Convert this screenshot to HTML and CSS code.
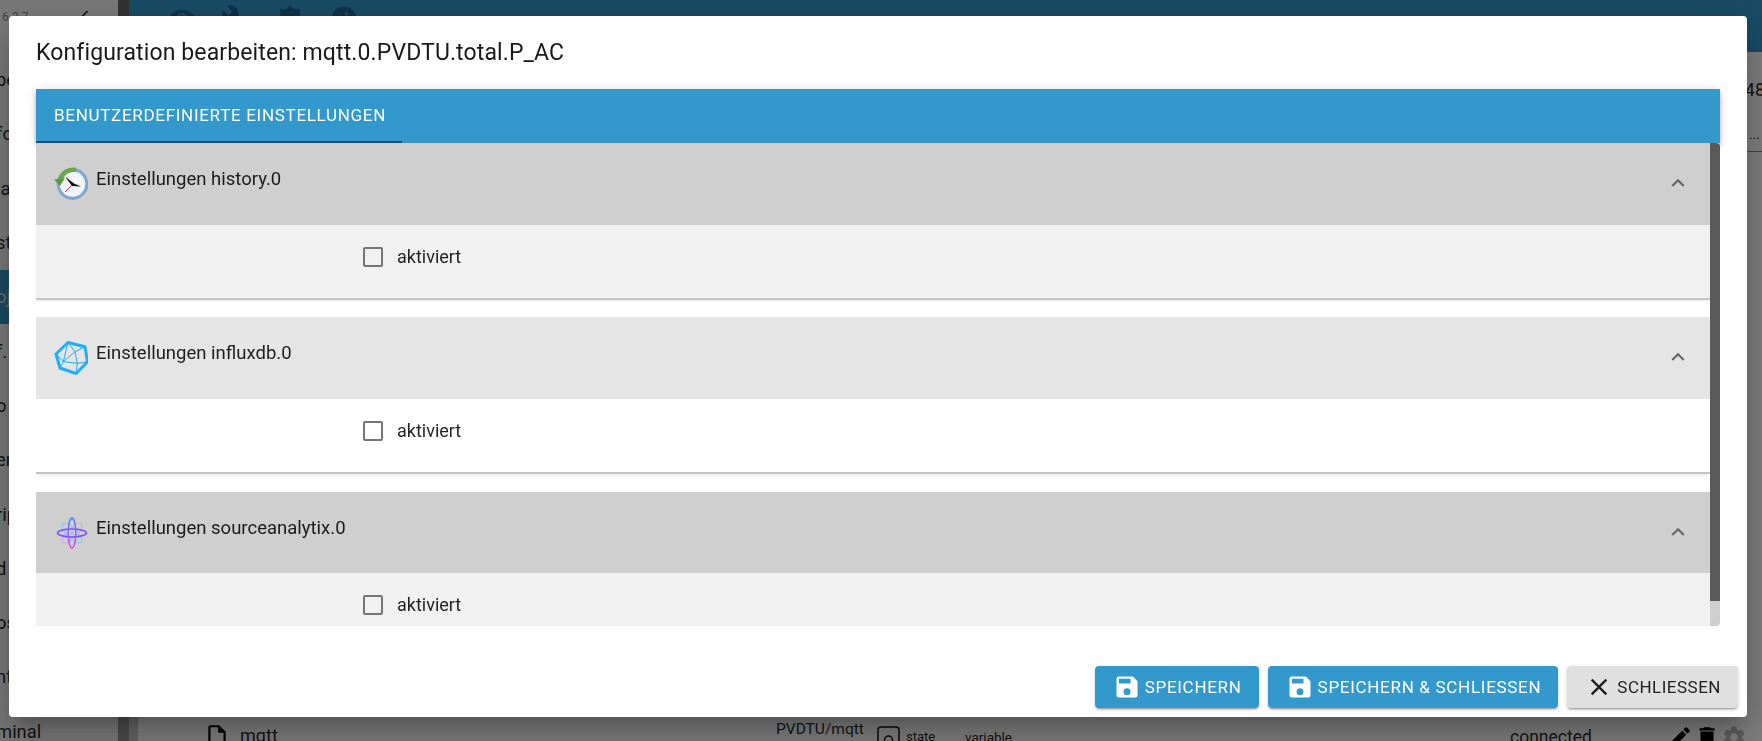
FILE: index.html
```html
<!DOCTYPE html>
<html>
<head>
  <meta charset="UTF-8">
  <title>Konfiguration bearbeiten</title>
  <link rel="stylesheet" href="styles.css">
</head>
<body>
  <div class="app">

    <!-- Page behind the dialog, only its edges show -->
    <div class="sidebar">
      <div class="version">
        <span>6.3.7</span>
        <svg class="collapse" viewBox="0 0 24 24"><path d="M15.410 7.410L14 6l-6 6 6 6 1.410-1.410L10.830 12z"/></svg>
      </div>
      <div class="menu-item"><span>pe</span></div>
      <div class="menu-item"><span>fo</span></div>
      <div class="menu-item"><span>la</span></div>
      <div class="menu-item"><span>st</span></div>
      <div class="menu-item selected"><span>oj</span></div>
      <div class="menu-item"><span>f.</span></div>
      <div class="menu-item"><span>o</span></div>
      <div class="menu-item"><span>er</span></div>
      <div class="menu-item"><span>rip</span></div>
      <div class="menu-item"><span>d</span></div>
      <div class="menu-item"><span>os</span></div>
      <div class="menu-item"><span>nt</span></div>
      <div class="menu-item"><span>minal</span></div>
    </div>
    <div class="main">
      <div class="topbar">
        <svg class="top-icon" viewBox="0 0 24 24"><path d="M12 4.500C7 4.500 2.700 7.600 1 12c1.700 4.400 6 7.500 11 7.500s9.300-3.100 11-7.500c-1.700-4.400-6-7.500-11-7.500zM12 17a5 5 0 1 1 0-10 5 5 0 0 1 0 10zm0-8a3 3 0 1 0 0 6 3 3 0 0 0 0-6z"/></svg>
        <svg class="top-icon" viewBox="0 0 24 24"><path d="M22.700 19l-9.100-9.100c.9-2.300.4-5-1.500-6.900-2-2-5-2.400-7.400-1.300L9 6 6 9 1.600 4.700C.4 7.100.9 10.100 2.900 12.100c1.900 1.900 4.600 2.400 6.900 1.500l9.100 9.100c.4.4 1 .4 1.400 0l2.300-2.300c.5-.4.5-1.100.1-1.400z"/></svg>
        <svg class="top-icon" viewBox="0 0 24 24"><path d="M12 1l3 3h5v5l3 3-3 3v5h-5l-3 3-3-3H4v-5l-3-3 3-3V4h5z"/></svg>
        <svg class="top-icon" viewBox="0 0 24 24"><path fill-rule="evenodd" d="M12 2a10 10 0 1 0 0 20 10 10 0 0 0 0-20zm2 4a1.500 1.500 0 1 1 0 3 1.500 1.500 0 0 1 0-3z"/></svg>
      </div>
      <div class="toolbar">
        <span class="toolbar-text">48</span>
        <span class="toolbar-dots">...</span>
      </div>
      <div class="list-space"></div>
      <div class="row">
        <svg class="file-icon" viewBox="0 0 24 24"><path d="M14 2H6a2 2 0 0 0-2 2v16a2 2 0 0 0 2 2h12a2 2 0 0 0 2-2V8l-6-6zm4 18H6V4h7v5h5v11z"/></svg>
        <span class="row-name">mqtt</span>
        <span class="row-path">PVDTU/mqtt</span>
        <svg class="type-icon" viewBox="0 0 23 24" fill="none" stroke="#111" stroke-width="1.500"><rect x="1" y="1" width="21" height="24" rx="3"/><circle cx="11.500" cy="14" r="4"/></svg>
        <span class="row-type">state</span>
        <span class="row-role">variable</span>
        <span class="row-value">connected</span>
        <span class="row-actions">
          <svg viewBox="0 0 24 24"><path d="M3 17.250V21h3.750L17.810 9.940l-3.750-3.750L3 17.250zM20.710 7.040a1 1 0 0 0 0-1.410l-2.340-2.340a1 1 0 0 0-1.410 0l-1.830 1.830 3.750 3.750 1.830-1.830z"/></svg>
          <svg viewBox="0 0 24 24"><path d="M6 19c0 1.100.9 2 2 2h8c1.100 0 2-.9 2-2V7H6v12zM19 4h-3.500l-1-1h-5l-1 1H5v2h14V4z"/></svg>
          <svg class="gear" viewBox="0 0 24 24"><path d="M19.140 12.940c.04-.3.06-.61.06-.94 0-.32-.02-.64-.07-.94l2.030-1.580a.49.49 0 0 0 .12-.61l-1.920-3.320a.488.488 0 0 0-.59-.22l-2.390.96c-.5-.38-1.030-.7-1.620-.94l-.36-2.540a.484.484 0 0 0-.48-.41h-3.840c-.24 0-.43.17-.47.41l-.36 2.540c-.59.24-1.130.57-1.620.94l-2.390-.96c-.22-.08-.47 0-.59.22L2.740 8.870c-.12.21-.08.47.12.61l2.030 1.580c-.05.3-.09.63-.09.94s.02.64.07.94l-2.030 1.580a.49.49 0 0 0-.12.61l1.920 3.320c.12.22.37.29.59.22l2.390-.96c.5.38 1.030.7 1.620.94l.36 2.540c.05.24.24.41.48.41h3.840c.24 0 .44-.17.47-.41l.36-2.540c.59-.24 1.130-.56 1.620-.94l2.390.96c.22.08.47 0 .59-.22l1.920-3.320c.12-.22.07-.47-.12-.61l-2.010-1.580zM12 15.600c-1.980 0-3.600-1.620-3.600-3.600s1.620-3.600 3.600-3.600 3.600 1.620 3.600 3.600-1.620 3.600-3.600 3.600z"/></svg>
        </span>
      </div>
    </div>
  </div>

  <div class="backdrop"></div>

  <!-- Dialog -->
  <div class="dialog">
    <h2 class="dialog-title">Konfiguration bearbeiten: mqtt.0.PVDTU.total.P_AC</h2>

    <div class="dialog-content">
      <div class="tabs">
        <div class="tab">Benutzerdefinierte Einstellungen</div>
      </div>

      <div class="panels">
        <div class="panels-list">

          <div class="panel">
            <div class="panel-head grey">
              <svg class="adapter-icon" viewBox="0 0 34 34">
                <circle cx="18.500" cy="17" r="14.300" fill="#f2f6fa" stroke="#7fa9d3" stroke-width="3.200"/>
                <path d="M6.500 12A13.500 13.500 0 0 1 22 3" fill="none" stroke="#6aa84f" stroke-width="4.500"/>
                <path d="M0 12.500l11-1.500-5 8z" fill="#5c9a41"/>
                <path d="M11 9.500l9 7 7 3-9-.5z" fill="#111"/>
                <path d="M18 18l-7 7" stroke="#d33" stroke-width="1"/>
              </svg>
              <span class="panel-title">Einstellungen history.0</span>
              <svg class="chevron" viewBox="0 0 24 24"><path d="M12 8l-6 6 1.410 1.410L12 10.830l4.590 4.580L18 14z"/></svg>
            </div>
            <div class="panel-body grey">
              <span class="check-box"></span>
              <span class="check-label">aktiviert</span>
            </div>
          </div>

          <div class="panel">
            <div class="panel-head light">
              <svg class="adapter-icon" viewBox="0 0 34 34" fill="none" stroke="#22adf6">
                <path d="M14 1.500L31 5.700 33.500 21 22 32.500 6 27 2 13z" stroke-width="3" stroke-linejoin="round"/>
                <path d="M14 1.500L21 10.700 31 5.700M21 10.700L9.300 20.700 14 1.500M21 10.700L23.300 22.300 9.300 20.700 6 27M23.300 22.300L33.500 21M23.300 22.300L22 32.500M2 13L9.300 20.700" stroke-width="1"/>
              </svg>
              <span class="panel-title">Einstellungen influxdb.0</span>
              <svg class="chevron" viewBox="0 0 24 24"><path d="M12 8l-6 6 1.410 1.410L12 10.830l4.590 4.580L18 14z"/></svg>
            </div>
            <div class="panel-body">
              <span class="check-box"></span>
              <span class="check-label">aktiviert</span>
            </div>
          </div>

          <div class="panel last">
            <div class="panel-head grey">
              <svg class="adapter-icon" viewBox="0 0 34 34" fill="none">
                <defs>
                  <linearGradient id="atom" x1="0" y1="0" x2="0" y2="1">
                    <stop offset="0" stop-color="#3b82f6"/>
                    <stop offset="1" stop-color="#d946ef"/>
                  </linearGradient>
                </defs>
                <ellipse cx="18" cy="17" rx="13" ry="5" transform="rotate(45 18 17)" stroke="#7cc8fb" stroke-width="1"/>
                <ellipse cx="18" cy="17" rx="13" ry="5" transform="rotate(-45 18 17)" stroke="#d8a4fb" stroke-width="1"/>
                <ellipse cx="18" cy="17" rx="14.500" ry="4" stroke="#7c4dff" stroke-width="1.500"/>
                <ellipse cx="18" cy="17" rx="3.800" ry="15" stroke="url(#atom)" stroke-width="1.500"/>
                <circle cx="18" cy="17" r="1.800" fill="#a5b4fc"/>
              </svg>
              <span class="panel-title">Einstellungen sourceanalytix.0</span>
              <svg class="chevron" viewBox="0 0 24 24"><path d="M12 8l-6 6 1.410 1.410L12 10.830l4.590 4.580L18 14z"/></svg>
            </div>
            <div class="panel-body grey">
              <span class="check-box"></span>
              <span class="check-label">aktiviert</span>
            </div>
          </div>

        </div>
        <div class="scrollbar"><div class="scroll-thumb"></div></div>
      </div>
    </div>

    <div class="dialog-actions">
      <button class="btn primary">
        <svg viewBox="0 0 24 24"><path d="M17 3H5a2 2 0 0 0-2 2v14a2 2 0 0 0 2 2h14a2 2 0 0 0 2-2V7l-4-4zm-5 16a3 3 0 1 1 0-6 3 3 0 0 1 0 6zm3-10H5V5h10v4z"/></svg>
        Speichern
      </button>
      <button class="btn primary">
        <svg viewBox="0 0 24 24"><path d="M17 3H5a2 2 0 0 0-2 2v14a2 2 0 0 0 2 2h14a2 2 0 0 0 2-2V7l-4-4zm-5 16a3 3 0 1 1 0-6 3 3 0 0 1 0 6zm3-10H5V5h10v4z"/></svg>
        Speichern &amp; Schließen
      </button>
      <button class="btn plain">
        <svg viewBox="0 0 24 24"><path d="M19 6.410L17.590 5 12 10.590 6.410 5 5 6.410 10.590 12 5 17.590 6.410 19 12 13.410 17.590 19 19 17.590 13.410 12z"/></svg>
        Schließen
      </button>
    </div>
  </div>
</body>
</html>
```

FILE: styles.css
```css
html, body {
  margin: 0;
  height: 741px;
  overflow: hidden;
}

body {
  font-family: Roboto, sans-serif;
  color: rgba(0, 0, 0, 0.87);
  background: #fff;
}

.app {
  display: flex;
  height: 741px;
}

/* page behind the dialog */
.sidebar {
  width: 118px;
  flex-shrink: 0;
  overflow: hidden;
  background: #f5f5f5;
  border-right: 11px solid #999;
  border-image: linear-gradient(#666 52px, #999 52px) 1;
}

.version {
  height: 52.5px;
  display: flex;
  font-size: 12px;
  color: #888;
  padding: 10px 0 0 2px;
  box-sizing: border-box;
}

.collapse {
  width: 22px;
  height: 22px;
  margin: -5.5px 0 0 45px;
  fill: #333;
}

.menu-item {
  height: 54.3px;
  display: flex;
  align-items: center;
  font-size: 18.4px;
}

.menu-item span {
  margin-left: -4px;
}

.menu-item.selected {
  background: #3399cc;
  color: #ddd;
}

.main {
  flex: 1;
  display: flex;
  flex-direction: column;
  background: #fff;
  min-width: 0;
}

.topbar {
  height: 52px;
  flex-shrink: 0;
  background: #3399cc;
  display: flex;
  gap: 24px;
  padding: 4px 0 0 38px;
  box-sizing: border-box;
}

.top-icon {
  width: 30px;
  height: 30px;
  fill: #1e6690;
}

.toolbar {
  height: 100px;
  flex-shrink: 0;
  display: flex;
  flex-direction: column;
  align-items: flex-end;
  border-bottom: 1px solid #888;
  font-size: 18px;
  line-height: 22px;
  box-sizing: border-box;
  padding-top: 27px;
}

.toolbar-text {
  margin-right: -3px;
}

.toolbar-dots {
  margin: 22px 2px 0 0;
  font-size: 14px;
}

.list-space {
  flex: 1;
  border-left: 9px solid #ccc;
}

.row {
  height: 24px;
  flex-shrink: 0;
  display: flex;
  align-items: flex-start;
  padding-left: 66px;
  border-left: 9px solid #ccc;
  overflow: hidden;
}

.file-icon {
  width: 26px;
  height: 26px;
  flex-shrink: 0;
  margin-top: 6px;
}

.row-name {
  width: 536px;
  margin: 8px 0 0 10px;
  font-size: 18px;
  line-height: 22px;
}

.row-path {
  width: 101px;
  margin-top: 3px;
  font-size: 15.5px;
  line-height: 18px;
}

.type-icon {
  width: 23px;
  height: 24px;
  flex-shrink: 0;
  margin-top: 9px;
}

.row-type {
  width: 59px;
  margin: 12px 0 0 6px;
  font-size: 13px;
  line-height: 16px;
}

.row-role {
  width: 545px;
  margin-top: 12px;
  font-size: 13.5px;
  line-height: 16px;
}

.row-value {
  width: 157px;
  margin-top: 9px;
  font-size: 17.5px;
  line-height: 22px;
}

.row-actions {
  display: flex;
  gap: 2px;
  margin-top: 7px;
}

.row-actions svg {
  width: 26px;
  height: 26px;
  margin-right: -1px;
}

.row-actions .gear {
  fill: #bbb;
}

.backdrop {
  position: fixed;
  inset: 0;
  background: rgba(0, 0, 0, 0.5);
}

/* dialog */
.dialog {
  position: fixed;
  left: 9px;
  top: 16px;
  width: 1738px;
  height: 701px;
  background: #fff;
  border-radius: 4px;
  box-shadow: 0 11px 15px -7px rgba(0, 0, 0, 0.2), 0 24px 38px 3px rgba(0, 0, 0, 0.14), 0 9px 46px 8px rgba(0, 0, 0, 0.12);
  display: flex;
  flex-direction: column;
}

.dialog-title {
  margin: 0;
  height: 73px;
  padding: 21px 27px 0;
  box-sizing: border-box;
  font-size: 23px;
  font-weight: 400;
  letter-spacing: 0.12px;
  line-height: 32px;
  color: rgba(0, 0, 0, 0.9);
}

.dialog-content {
  flex: 1;
  padding: 0 27px;
  min-height: 0;
}

.tabs {
  height: 54px;
  background: #3399cc;
  box-shadow: 0 2px 4px -1px rgba(0, 0, 0, 0.2), 0 4px 5px 0 rgba(0, 0, 0, 0.14), 0 1px 10px 0 rgba(0, 0, 0, 0.12);
}

.tab {
  width: 366px;
  height: 54px;
  padding-left: 18px;
  box-sizing: border-box;
  border-bottom: 2px solid #164a8a;
  text-transform: uppercase;
  color: #fff;
  font-size: 17px;
  font-weight: 400;
  letter-spacing: 0.7px;
  line-height: 52px;
  white-space: nowrap;
}

.panels {
  display: flex;
  height: 483px;
}

.panels-list {
  flex: 1;
  min-width: 0;
}

.panel {
  height: 174.4px;
}

.panel.last {
  height: 134px;
}

.panel-head {
  height: 81.6px;
  display: flex;
  padding: 24px 19px 0 18px;
  box-sizing: border-box;
}

.panel-head.grey { background: #cfcfcf; }
.panel-head.light { background: #e5e5e5; }

.adapter-icon {
  width: 34px;
  height: 34px;
  flex-shrink: 0;
}

.panel-title {
  font-size: 18.5px;
  line-height: 24px;
  margin-left: 8px;
  flex: 1;
}

.chevron {
  width: 26px;
  height: 26px;
  fill: #666;
  margin-top: 3px;
}

.panel-body {
  height: 75px;
  padding: 22px 0 0 327px;
  box-sizing: border-box;
  display: flex;
  align-items: flex-start;
  background: #fff;
  border-bottom: 2px solid #c4c4c4;
  box-shadow: 0 2px 2px -1px rgba(0, 0, 0, 0.1);
}

.panel-body.grey { background: #f1f1f1; }

.panel.last .panel-body {
  height: 52.4px;
  border-bottom: 0;
  box-shadow: none;
}

.check-box {
  width: 16px;
  height: 16px;
  border: 2px solid #757575;
  border-radius: 2px;
}

.check-label {
  font-size: 18px;
  line-height: 20px;
  margin-left: 14px;
}

.scrollbar {
  width: 10px;
  flex-shrink: 0;
  background: #cfcfcf;
  border-radius: 0 0 4px 0;
}

.scroll-thumb {
  height: 458px;
  background: #5a5a5a;
  border-radius: 0 4px 0 0;
}

.dialog-actions {
  height: 91px;
  flex-shrink: 0;
  display: flex;
  justify-content: flex-end;
  gap: 9px;
  padding: 40px 9px 0 0;
  box-sizing: border-box;
}

.btn {
  height: 42px;
  display: flex;
  align-items: center;
  border: none;
  border-radius: 4px;
  padding: 0 17px 0 18px;
  font-family: Roboto, sans-serif;
  font-size: 17px;
  font-weight: 400;
  letter-spacing: 0.7px;
  text-transform: uppercase;
  box-shadow: 0 3px 1px -2px rgba(0, 0, 0, 0.2), 0 2px 2px 0 rgba(0, 0, 0, 0.14), 0 1px 5px 0 rgba(0, 0, 0, 0.12);
}

.btn svg {
  width: 28px;
  height: 28px;
  margin-right: 4px;
  fill: currentColor;
}

.btn.primary {
  background: #3399cc;
  color: #fff;
}

.btn.plain {
  background: #e0e0e0;
  color: rgba(0, 0, 0, 0.87);
  letter-spacing: 0.5px;
}
```
